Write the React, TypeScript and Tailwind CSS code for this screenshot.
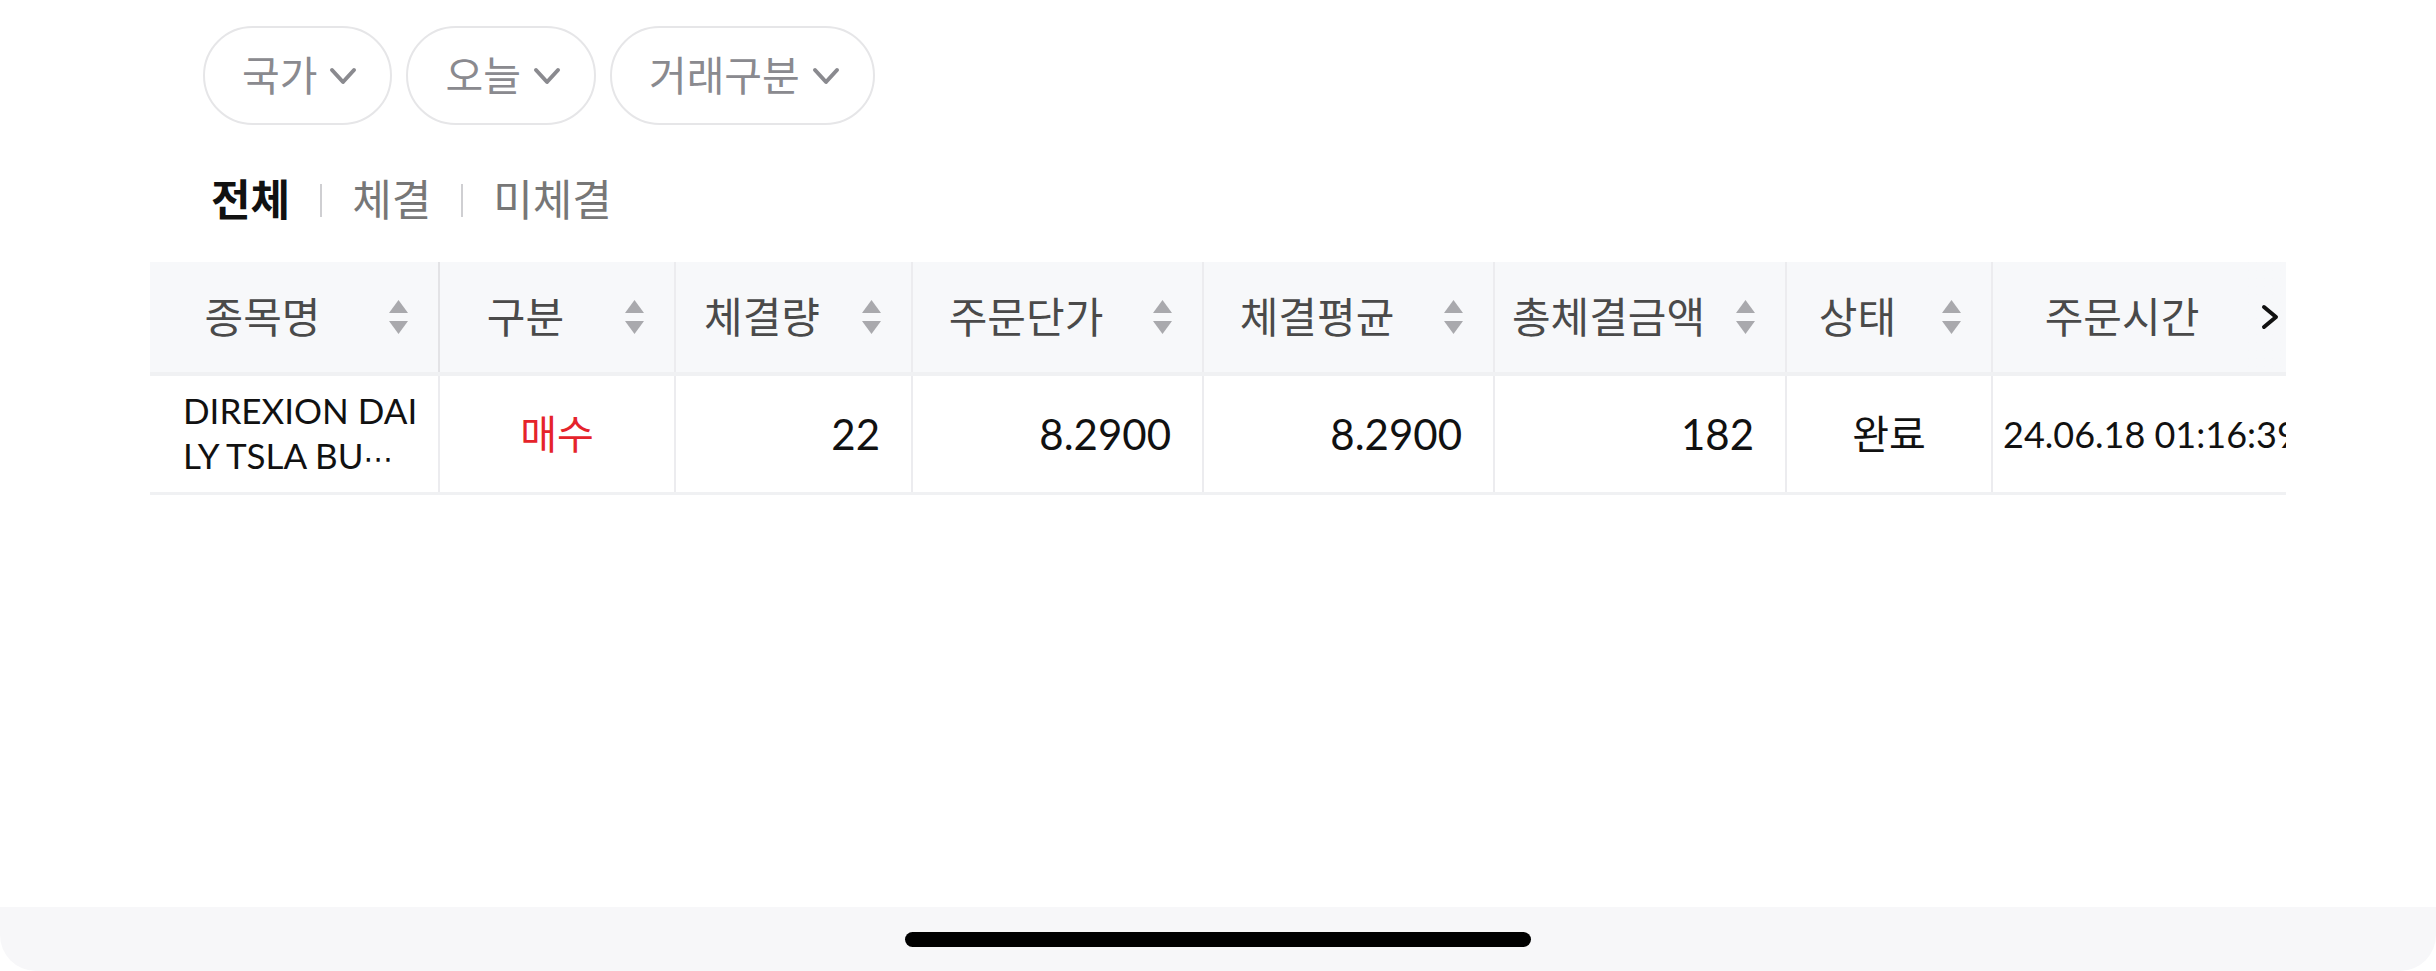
type Col = {
  label: string;
  width: string;
  sort: boolean;
  border: string;
};

const columns: Col[] = [
  { label: "종목명", width: "w-[290px]", sort: true, border: "border-r-2 border-[#e3e3e6]" },
  { label: "구분", width: "w-[236px]", sort: true, border: "border-r-2 border-[#ececef]" },
  { label: "체결량", width: "w-[237px]", sort: true, border: "border-r-2 border-[#ececef]" },
  { label: "주문단가", width: "w-[291px]", sort: true, border: "border-r-2 border-[#ececef]" },
  { label: "체결평균", width: "w-[291px]", sort: true, border: "border-r-2 border-[#ececef]" },
  { label: "총체결금액", width: "w-[292px]", sort: true, border: "border-r-2 border-[#ececef]" },
  { label: "상태", width: "w-[206px]", sort: true, border: "border-r-2 border-[#ececef]" },
  { label: "주문시간", width: "w-[300px]", sort: false, border: "" },
];

function SortIcon() {
  return (
    <svg width="19" height="34" viewBox="0 0 19 34" className="shrink-0">
      <polygon points="9.5,0 19,13 0,13" fill="#a9a9ad" />
      <polygon points="0,21 19,21 9.5,34" fill="#a9a9ad" />
    </svg>
  );
}

function Chevron() {
  return (
    <svg width="28" height="18" viewBox="0 0 28 18" className="shrink-0">
      <path d="M3 3 L14 15 L25 3" fill="none" stroke="#8a8a8f" strokeWidth="4" strokeLinecap="round" strokeLinejoin="round" />
    </svg>
  );
}

function FilterPill({ label }: { label: string }) {
  return (
    <button className="h-[99px] rounded-full border-2 border-[#e6e6e8] pl-[37px] pr-[33px] flex items-center gap-[12px] text-[41px] text-[#8a8a8f]">
      <span>{label}</span>
      <Chevron />
    </button>
  );
}

export default function App() {
  return (
    <div className="w-[2436px] h-[971px] bg-white flex flex-col font-['Lato','Noto_Sans_CJK_KR',sans-serif]">
      <div className="flex-1">
        {/* 필터 */}
        <div className="pt-[26px] pl-[203px] flex gap-[14px]">
          <FilterPill label="국가" />
          <FilterPill label="오늘" />
          <FilterPill label="거래구분" />
        </div>

        {/* 탭 */}
        <div className="mt-[45px] pl-[211px] h-[60px] flex items-center gap-[30px] text-[43px]">
          <span className="font-bold text-[#111]">전체</span>
          <span className="w-[2px] h-[33px] bg-[#cfcfd2]" />
          <span className="text-[#777]">체결</span>
          <span className="w-[2px] h-[33px] bg-[#cfcfd2]" />
          <span className="text-[#777]">미체결</span>
        </div>

        {/* 테이블 */}
        <div className="mt-[32px] ml-[150px] w-[2136px] overflow-hidden relative">
          <div className="flex h-[114px] bg-[#f7f8fa] border-b-4 border-[#f0f1f3] w-max">
            {columns.map((c) => (
              <div
                key={c.label}
                className={`${c.width} ${c.border} shrink-0 flex items-center text-[42px] text-[#4a4a4a] ${
                  c.sort ? "pr-[30px] gap-[14px]" : "pr-[42px]"
                }`}
              >
                <span className="flex-1 text-center whitespace-nowrap">{c.label}</span>
                {c.sort && <SortIcon />}
              </div>
            ))}
          </div>

          <div className="flex h-[119px] border-b-[3px] border-[#f0f1f3] w-max text-[#111]">
            <div className="w-[290px] shrink-0 border-r-2 border-[#ececef] pl-[33px] flex flex-col justify-center text-[35px] leading-[45px] whitespace-nowrap">
              <span>DIREXION DAI</span>
              <span>
                LY TSLA BU<span className="font-['DejaVu_Sans',sans-serif] text-[30px]">⋯</span>
              </span>
            </div>
            <div className="w-[236px] shrink-0 border-r-2 border-[#ececef] flex items-center justify-center text-[40px] text-[#e5232b]">
              매수
            </div>
            <div className="w-[237px] shrink-0 border-r-2 border-[#ececef] flex items-center justify-end pr-[31px] text-[42px]">
              22
            </div>
            <div className="w-[291px] shrink-0 border-r-2 border-[#ececef] flex items-center justify-end pr-[31px] text-[42px]">
              8.2900
            </div>
            <div className="w-[291px] shrink-0 border-r-2 border-[#ececef] flex items-center justify-end pr-[31px] text-[42px]">
              8.2900
            </div>
            <div className="w-[292px] shrink-0 border-r-2 border-[#ececef] flex items-center justify-end pr-[31px] text-[42px]">
              182
            </div>
            <div className="w-[206px] shrink-0 border-r-2 border-[#ececef] flex items-center justify-center text-[40px]">
              완료
            </div>
            <div className="w-[300px] shrink-0 flex items-center pl-[10px] text-[36px] whitespace-nowrap">
              24.06.18 01:16:39
            </div>
          </div>

          <div className="absolute right-0 top-0 h-[110px] w-[64px] bg-linear-to-r from-[#f7f8fa00] to-[#f7f8fa] flex items-center justify-end pr-[5px]">
            <svg width="22" height="26" viewBox="0 0 22 26">
              <path d="M5 3 L17 13 L5 23" fill="none" stroke="#111" strokeWidth="4" strokeLinecap="round" strokeLinejoin="round" />
            </svg>
          </div>
        </div>
      </div>

      {/* 홈 인디케이터 */}
      <div className="h-[64px] bg-[#f7f7f9] rounded-b-[36px] flex items-center justify-center">
        <div className="w-[626px] h-[15px] rounded-full bg-black" />
      </div>
    </div>
  );
}
